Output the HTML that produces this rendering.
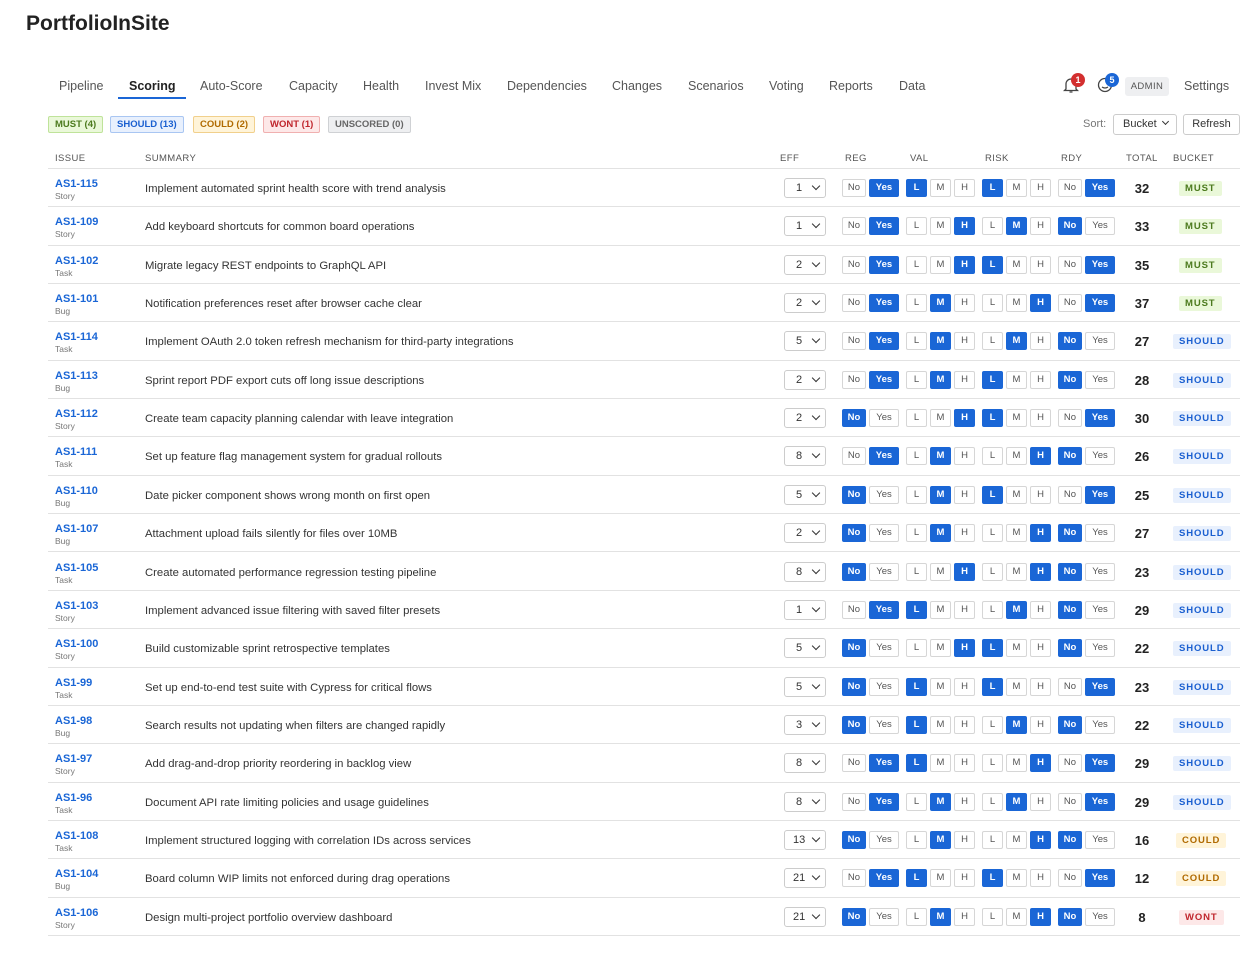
<!DOCTYPE html>
<html><head><meta charset="utf-8"><style>
*{box-sizing:border-box;margin:0;padding:0}
body{width:1255px;height:971px;background:#fff;font-family:"Liberation Sans",Arial,sans-serif;color:#333;position:relative;overflow:hidden}
.abs{position:absolute}
h1{position:absolute;left:26px;top:12px;font-size:21px;font-weight:700;color:#222}
.nav{position:absolute;top:79px;font-size:12.5px;color:#555}
.nav.act{color:#222;font-weight:700}
.tag{position:absolute;top:116px;height:17px;border:1px solid;border-radius:2px;font-size:9.5px;font-weight:700;line-height:15px;padding:0 6px}
.hd{position:absolute;top:153px;font-size:9.5px;color:#555;letter-spacing:.4px}
.r{position:absolute;left:48px;width:1192px;height:38.35px;border-bottom:1px solid #e2e2e2}
.r .id{position:absolute;left:7px;top:9px;font-size:11px;font-weight:700;color:#1a66d6}
.r .ty{position:absolute;left:7px;top:22px;font-size:8.5px;color:#777}
.r .s{position:absolute;left:97px;top:14px;font-size:11.3px;color:#333}
.r .e{position:absolute;left:736px;top:9px;width:42px;height:20px;border:1px solid #ccc;border-radius:3px;font-size:11px;line-height:18px;padding-left:11px}
.r .e:after{content:"";position:absolute;right:6px;top:4px;width:5px;height:5px;border-right:1.6px solid #333;border-bottom:1.6px solid #333;transform:rotate(45deg)}
.b{position:absolute;top:10px;height:18px;border:1px solid #d6d6d6;border-radius:2px;font-size:9.5px;line-height:16px;text-align:center;color:#555;background:#fff}
.b.on{background:#1a66d6;border-color:#1a66d6;color:#fff;font-weight:700}
.t{position:absolute;left:1080px;width:28px;text-align:center;top:12px;font-size:13px;font-weight:700;color:#222}
.k{position:absolute;top:12px;height:15px;font-size:9.5px;font-weight:700;letter-spacing:.9px;line-height:15px;padding:0 6px;border-radius:2px}
.MUST{background:#eaf8d9;color:#4c7a1e;left:1131px}
.SHOULD{background:#e8f0fd;color:#1a5fd0;left:1125px}
.COULD{background:#fff4d9;color:#b06a00;left:1128px}
.WONT{background:#fde8e8;color:#c0262d;left:1131px}
</style></head><body>
<h1>PortfolioInSite</h1>
<div class="nav" style="left:59px">Pipeline</div>
<div class="nav act" style="left:129px">Scoring</div>
<div class="abs" style="left:118px;top:97px;width:68px;height:2px;background:#1a66d6"></div>
<div class="nav" style="left:200px">Auto-Score</div>
<div class="nav" style="left:289px">Capacity</div>
<div class="nav" style="left:363px">Health</div>
<div class="nav" style="left:425px">Invest Mix</div>
<div class="nav" style="left:507px">Dependencies</div>
<div class="nav" style="left:612px">Changes</div>
<div class="nav" style="left:688px">Scenarios</div>
<div class="nav" style="left:769px">Voting</div>
<div class="nav" style="left:829px">Reports</div>
<div class="nav" style="left:899px">Data</div>
<svg class="abs" style="left:1063px;top:76px" width="16" height="18" viewBox="0 0 16 18"><path d="M3 13V8a5 5 0 0 1 10 0v5l1.5 1.5h-13z M6.5 16h3" fill="none" stroke="#444" stroke-width="1.3"/></svg>
<div class="abs" style="left:1071px;top:73px;width:14px;height:14px;border-radius:7px;background:#d32f2f;color:#fff;font-size:9px;font-weight:700;text-align:center;line-height:14px">1</div>
<svg class="abs" style="left:1097px;top:77px" width="16" height="16" viewBox="0 0 16 16"><circle cx="8" cy="8" r="6.5" fill="none" stroke="#444" stroke-width="1.3"/><path d="M5 10q3 2 6 0" fill="none" stroke="#444" stroke-width="1.2"/></svg>
<div class="abs" style="left:1105px;top:73px;width:14px;height:14px;border-radius:7px;background:#1a66d6;color:#fff;font-size:9px;font-weight:700;text-align:center;line-height:14px">5</div>
<div class="abs" style="left:1125px;top:77px;width:44px;height:19px;background:#eeeff1;border-radius:3px;font-size:9.5px;color:#555;text-align:center;line-height:19px;letter-spacing:.4px">ADMIN</div>
<div class="nav" style="left:1184px">Settings</div>
<div class="tag" style="left:48px;background:#eaf8d9;border-color:#bfe39a;color:#4c7a1e">MUST (4)</div>
<div class="tag" style="left:110px;background:#e8f0fd;border-color:#a9c6f2;color:#1a5fd0">SHOULD (13)</div>
<div class="tag" style="left:193px;background:#fff4d9;border-color:#f1d08c;color:#b06a00">COULD (2)</div>
<div class="tag" style="left:263px;background:#fde8e8;border-color:#f0b0b0;color:#c0262d">WONT (1)</div>
<div class="tag" style="left:328px;background:#eeeff1;border-color:#cfd1d4;color:#666">UNSCORED (0)</div>
<div class="abs" style="left:1083px;top:118px;font-size:11px;color:#777">Sort:</div>
<div class="abs" style="left:1113px;top:114px;width:64px;height:21px;border:1px solid #ccc;border-radius:3px;font-size:11px;line-height:19px;padding-left:9px">Bucket</div>
<div class="abs" style="left:1163px;top:119px;width:5px;height:5px;border-right:1.6px solid #333;border-bottom:1.6px solid #333;transform:rotate(45deg)"></div>
<div class="abs" style="left:1183px;top:114px;width:57px;height:21px;border:1px solid #ccc;border-radius:3px;font-size:11px;line-height:19px;text-align:center">Refresh</div>
<div class="hd" style="left:55px">ISSUE</div><div class="hd" style="left:145px">SUMMARY</div><div class="hd" style="left:780px">EFF</div><div class="hd" style="left:845px">REG</div><div class="hd" style="left:910px">VAL</div><div class="hd" style="left:985px">RISK</div><div class="hd" style="left:1061px">RDY</div><div class="hd" style="left:1126px">TOTAL</div><div class="hd" style="left:1173px">BUCKET</div>
<div class="abs" style="left:48px;top:168px;width:1192px;height:1px;background:#e2e2e2"></div>
<div style="position:absolute;left:0;top:169px">
<div class="r" style="top:0px"><div class="id">AS1-115</div><div class="ty">Story</div><div class="s">Implement automated sprint health score with trend analysis</div><div class="e">1</div><div class="b" style="left:794px;width:24px">No</div><div class="b on" style="left:821px;width:30px">Yes</div><div class="b on" style="left:858px;width:21px">L</div><div class="b" style="left:882px;width:21px">M</div><div class="b" style="left:906px;width:21px">H</div><div class="b on" style="left:934px;width:21px">L</div><div class="b" style="left:958px;width:21px">M</div><div class="b" style="left:982px;width:21px">H</div><div class="b" style="left:1010px;width:24px">No</div><div class="b on" style="left:1037px;width:30px">Yes</div><div class="t">32</div><div class="k MUST">MUST</div></div>
<div class="r" style="top:38.35px"><div class="id">AS1-109</div><div class="ty">Story</div><div class="s">Add keyboard shortcuts for common board operations</div><div class="e">1</div><div class="b" style="left:794px;width:24px">No</div><div class="b on" style="left:821px;width:30px">Yes</div><div class="b" style="left:858px;width:21px">L</div><div class="b" style="left:882px;width:21px">M</div><div class="b on" style="left:906px;width:21px">H</div><div class="b" style="left:934px;width:21px">L</div><div class="b on" style="left:958px;width:21px">M</div><div class="b" style="left:982px;width:21px">H</div><div class="b on" style="left:1010px;width:24px">No</div><div class="b" style="left:1037px;width:30px">Yes</div><div class="t">33</div><div class="k MUST">MUST</div></div>
<div class="r" style="top:76.7px"><div class="id">AS1-102</div><div class="ty">Task</div><div class="s">Migrate legacy REST endpoints to GraphQL API</div><div class="e">2</div><div class="b" style="left:794px;width:24px">No</div><div class="b on" style="left:821px;width:30px">Yes</div><div class="b" style="left:858px;width:21px">L</div><div class="b" style="left:882px;width:21px">M</div><div class="b on" style="left:906px;width:21px">H</div><div class="b on" style="left:934px;width:21px">L</div><div class="b" style="left:958px;width:21px">M</div><div class="b" style="left:982px;width:21px">H</div><div class="b" style="left:1010px;width:24px">No</div><div class="b on" style="left:1037px;width:30px">Yes</div><div class="t">35</div><div class="k MUST">MUST</div></div>
<div class="r" style="top:115.05px"><div class="id">AS1-101</div><div class="ty">Bug</div><div class="s">Notification preferences reset after browser cache clear</div><div class="e">2</div><div class="b" style="left:794px;width:24px">No</div><div class="b on" style="left:821px;width:30px">Yes</div><div class="b" style="left:858px;width:21px">L</div><div class="b on" style="left:882px;width:21px">M</div><div class="b" style="left:906px;width:21px">H</div><div class="b" style="left:934px;width:21px">L</div><div class="b" style="left:958px;width:21px">M</div><div class="b on" style="left:982px;width:21px">H</div><div class="b" style="left:1010px;width:24px">No</div><div class="b on" style="left:1037px;width:30px">Yes</div><div class="t">37</div><div class="k MUST">MUST</div></div>
<div class="r" style="top:153.4px"><div class="id">AS1-114</div><div class="ty">Task</div><div class="s">Implement OAuth 2.0 token refresh mechanism for third-party integrations</div><div class="e">5</div><div class="b" style="left:794px;width:24px">No</div><div class="b on" style="left:821px;width:30px">Yes</div><div class="b" style="left:858px;width:21px">L</div><div class="b on" style="left:882px;width:21px">M</div><div class="b" style="left:906px;width:21px">H</div><div class="b" style="left:934px;width:21px">L</div><div class="b on" style="left:958px;width:21px">M</div><div class="b" style="left:982px;width:21px">H</div><div class="b on" style="left:1010px;width:24px">No</div><div class="b" style="left:1037px;width:30px">Yes</div><div class="t">27</div><div class="k SHOULD">SHOULD</div></div>
<div class="r" style="top:191.75px"><div class="id">AS1-113</div><div class="ty">Bug</div><div class="s">Sprint report PDF export cuts off long issue descriptions</div><div class="e">2</div><div class="b" style="left:794px;width:24px">No</div><div class="b on" style="left:821px;width:30px">Yes</div><div class="b" style="left:858px;width:21px">L</div><div class="b on" style="left:882px;width:21px">M</div><div class="b" style="left:906px;width:21px">H</div><div class="b on" style="left:934px;width:21px">L</div><div class="b" style="left:958px;width:21px">M</div><div class="b" style="left:982px;width:21px">H</div><div class="b on" style="left:1010px;width:24px">No</div><div class="b" style="left:1037px;width:30px">Yes</div><div class="t">28</div><div class="k SHOULD">SHOULD</div></div>
<div class="r" style="top:230.1px"><div class="id">AS1-112</div><div class="ty">Story</div><div class="s">Create team capacity planning calendar with leave integration</div><div class="e">2</div><div class="b on" style="left:794px;width:24px">No</div><div class="b" style="left:821px;width:30px">Yes</div><div class="b" style="left:858px;width:21px">L</div><div class="b" style="left:882px;width:21px">M</div><div class="b on" style="left:906px;width:21px">H</div><div class="b on" style="left:934px;width:21px">L</div><div class="b" style="left:958px;width:21px">M</div><div class="b" style="left:982px;width:21px">H</div><div class="b" style="left:1010px;width:24px">No</div><div class="b on" style="left:1037px;width:30px">Yes</div><div class="t">30</div><div class="k SHOULD">SHOULD</div></div>
<div class="r" style="top:268.45px"><div class="id">AS1-111</div><div class="ty">Task</div><div class="s">Set up feature flag management system for gradual rollouts</div><div class="e">8</div><div class="b" style="left:794px;width:24px">No</div><div class="b on" style="left:821px;width:30px">Yes</div><div class="b" style="left:858px;width:21px">L</div><div class="b on" style="left:882px;width:21px">M</div><div class="b" style="left:906px;width:21px">H</div><div class="b" style="left:934px;width:21px">L</div><div class="b" style="left:958px;width:21px">M</div><div class="b on" style="left:982px;width:21px">H</div><div class="b on" style="left:1010px;width:24px">No</div><div class="b" style="left:1037px;width:30px">Yes</div><div class="t">26</div><div class="k SHOULD">SHOULD</div></div>
<div class="r" style="top:306.8px"><div class="id">AS1-110</div><div class="ty">Bug</div><div class="s">Date picker component shows wrong month on first open</div><div class="e">5</div><div class="b on" style="left:794px;width:24px">No</div><div class="b" style="left:821px;width:30px">Yes</div><div class="b" style="left:858px;width:21px">L</div><div class="b on" style="left:882px;width:21px">M</div><div class="b" style="left:906px;width:21px">H</div><div class="b on" style="left:934px;width:21px">L</div><div class="b" style="left:958px;width:21px">M</div><div class="b" style="left:982px;width:21px">H</div><div class="b" style="left:1010px;width:24px">No</div><div class="b on" style="left:1037px;width:30px">Yes</div><div class="t">25</div><div class="k SHOULD">SHOULD</div></div>
<div class="r" style="top:345.15px"><div class="id">AS1-107</div><div class="ty">Bug</div><div class="s">Attachment upload fails silently for files over 10MB</div><div class="e">2</div><div class="b on" style="left:794px;width:24px">No</div><div class="b" style="left:821px;width:30px">Yes</div><div class="b" style="left:858px;width:21px">L</div><div class="b on" style="left:882px;width:21px">M</div><div class="b" style="left:906px;width:21px">H</div><div class="b" style="left:934px;width:21px">L</div><div class="b" style="left:958px;width:21px">M</div><div class="b on" style="left:982px;width:21px">H</div><div class="b on" style="left:1010px;width:24px">No</div><div class="b" style="left:1037px;width:30px">Yes</div><div class="t">27</div><div class="k SHOULD">SHOULD</div></div>
<div class="r" style="top:383.5px"><div class="id">AS1-105</div><div class="ty">Task</div><div class="s">Create automated performance regression testing pipeline</div><div class="e">8</div><div class="b on" style="left:794px;width:24px">No</div><div class="b" style="left:821px;width:30px">Yes</div><div class="b" style="left:858px;width:21px">L</div><div class="b" style="left:882px;width:21px">M</div><div class="b on" style="left:906px;width:21px">H</div><div class="b" style="left:934px;width:21px">L</div><div class="b" style="left:958px;width:21px">M</div><div class="b on" style="left:982px;width:21px">H</div><div class="b on" style="left:1010px;width:24px">No</div><div class="b" style="left:1037px;width:30px">Yes</div><div class="t">23</div><div class="k SHOULD">SHOULD</div></div>
<div class="r" style="top:421.85px"><div class="id">AS1-103</div><div class="ty">Story</div><div class="s">Implement advanced issue filtering with saved filter presets</div><div class="e">1</div><div class="b" style="left:794px;width:24px">No</div><div class="b on" style="left:821px;width:30px">Yes</div><div class="b on" style="left:858px;width:21px">L</div><div class="b" style="left:882px;width:21px">M</div><div class="b" style="left:906px;width:21px">H</div><div class="b" style="left:934px;width:21px">L</div><div class="b on" style="left:958px;width:21px">M</div><div class="b" style="left:982px;width:21px">H</div><div class="b on" style="left:1010px;width:24px">No</div><div class="b" style="left:1037px;width:30px">Yes</div><div class="t">29</div><div class="k SHOULD">SHOULD</div></div>
<div class="r" style="top:460.2px"><div class="id">AS1-100</div><div class="ty">Story</div><div class="s">Build customizable sprint retrospective templates</div><div class="e">5</div><div class="b on" style="left:794px;width:24px">No</div><div class="b" style="left:821px;width:30px">Yes</div><div class="b" style="left:858px;width:21px">L</div><div class="b" style="left:882px;width:21px">M</div><div class="b on" style="left:906px;width:21px">H</div><div class="b on" style="left:934px;width:21px">L</div><div class="b" style="left:958px;width:21px">M</div><div class="b" style="left:982px;width:21px">H</div><div class="b on" style="left:1010px;width:24px">No</div><div class="b" style="left:1037px;width:30px">Yes</div><div class="t">22</div><div class="k SHOULD">SHOULD</div></div>
<div class="r" style="top:498.55px"><div class="id">AS1-99</div><div class="ty">Task</div><div class="s">Set up end-to-end test suite with Cypress for critical flows</div><div class="e">5</div><div class="b on" style="left:794px;width:24px">No</div><div class="b" style="left:821px;width:30px">Yes</div><div class="b on" style="left:858px;width:21px">L</div><div class="b" style="left:882px;width:21px">M</div><div class="b" style="left:906px;width:21px">H</div><div class="b on" style="left:934px;width:21px">L</div><div class="b" style="left:958px;width:21px">M</div><div class="b" style="left:982px;width:21px">H</div><div class="b" style="left:1010px;width:24px">No</div><div class="b on" style="left:1037px;width:30px">Yes</div><div class="t">23</div><div class="k SHOULD">SHOULD</div></div>
<div class="r" style="top:536.9px"><div class="id">AS1-98</div><div class="ty">Bug</div><div class="s">Search results not updating when filters are changed rapidly</div><div class="e">3</div><div class="b on" style="left:794px;width:24px">No</div><div class="b" style="left:821px;width:30px">Yes</div><div class="b on" style="left:858px;width:21px">L</div><div class="b" style="left:882px;width:21px">M</div><div class="b" style="left:906px;width:21px">H</div><div class="b" style="left:934px;width:21px">L</div><div class="b on" style="left:958px;width:21px">M</div><div class="b" style="left:982px;width:21px">H</div><div class="b on" style="left:1010px;width:24px">No</div><div class="b" style="left:1037px;width:30px">Yes</div><div class="t">22</div><div class="k SHOULD">SHOULD</div></div>
<div class="r" style="top:575.25px"><div class="id">AS1-97</div><div class="ty">Story</div><div class="s">Add drag-and-drop priority reordering in backlog view</div><div class="e">8</div><div class="b" style="left:794px;width:24px">No</div><div class="b on" style="left:821px;width:30px">Yes</div><div class="b on" style="left:858px;width:21px">L</div><div class="b" style="left:882px;width:21px">M</div><div class="b" style="left:906px;width:21px">H</div><div class="b" style="left:934px;width:21px">L</div><div class="b" style="left:958px;width:21px">M</div><div class="b on" style="left:982px;width:21px">H</div><div class="b" style="left:1010px;width:24px">No</div><div class="b on" style="left:1037px;width:30px">Yes</div><div class="t">29</div><div class="k SHOULD">SHOULD</div></div>
<div class="r" style="top:613.6px"><div class="id">AS1-96</div><div class="ty">Task</div><div class="s">Document API rate limiting policies and usage guidelines</div><div class="e">8</div><div class="b" style="left:794px;width:24px">No</div><div class="b on" style="left:821px;width:30px">Yes</div><div class="b" style="left:858px;width:21px">L</div><div class="b on" style="left:882px;width:21px">M</div><div class="b" style="left:906px;width:21px">H</div><div class="b" style="left:934px;width:21px">L</div><div class="b on" style="left:958px;width:21px">M</div><div class="b" style="left:982px;width:21px">H</div><div class="b" style="left:1010px;width:24px">No</div><div class="b on" style="left:1037px;width:30px">Yes</div><div class="t">29</div><div class="k SHOULD">SHOULD</div></div>
<div class="r" style="top:651.95px"><div class="id">AS1-108</div><div class="ty">Task</div><div class="s">Implement structured logging with correlation IDs across services</div><div class="e" style="padding-left:8px">13</div><div class="b on" style="left:794px;width:24px">No</div><div class="b" style="left:821px;width:30px">Yes</div><div class="b" style="left:858px;width:21px">L</div><div class="b on" style="left:882px;width:21px">M</div><div class="b" style="left:906px;width:21px">H</div><div class="b" style="left:934px;width:21px">L</div><div class="b" style="left:958px;width:21px">M</div><div class="b on" style="left:982px;width:21px">H</div><div class="b on" style="left:1010px;width:24px">No</div><div class="b" style="left:1037px;width:30px">Yes</div><div class="t">16</div><div class="k COULD">COULD</div></div>
<div class="r" style="top:690.3px"><div class="id">AS1-104</div><div class="ty">Bug</div><div class="s">Board column WIP limits not enforced during drag operations</div><div class="e" style="padding-left:8px">21</div><div class="b" style="left:794px;width:24px">No</div><div class="b on" style="left:821px;width:30px">Yes</div><div class="b on" style="left:858px;width:21px">L</div><div class="b" style="left:882px;width:21px">M</div><div class="b" style="left:906px;width:21px">H</div><div class="b on" style="left:934px;width:21px">L</div><div class="b" style="left:958px;width:21px">M</div><div class="b" style="left:982px;width:21px">H</div><div class="b" style="left:1010px;width:24px">No</div><div class="b on" style="left:1037px;width:30px">Yes</div><div class="t">12</div><div class="k COULD">COULD</div></div>
<div class="r" style="top:728.65px"><div class="id">AS1-106</div><div class="ty">Story</div><div class="s">Design multi-project portfolio overview dashboard</div><div class="e" style="padding-left:8px">21</div><div class="b on" style="left:794px;width:24px">No</div><div class="b" style="left:821px;width:30px">Yes</div><div class="b" style="left:858px;width:21px">L</div><div class="b on" style="left:882px;width:21px">M</div><div class="b" style="left:906px;width:21px">H</div><div class="b" style="left:934px;width:21px">L</div><div class="b" style="left:958px;width:21px">M</div><div class="b on" style="left:982px;width:21px">H</div><div class="b on" style="left:1010px;width:24px">No</div><div class="b" style="left:1037px;width:30px">Yes</div><div class="t">8</div><div class="k WONT">WONT</div></div>
</div>
</body></html>
